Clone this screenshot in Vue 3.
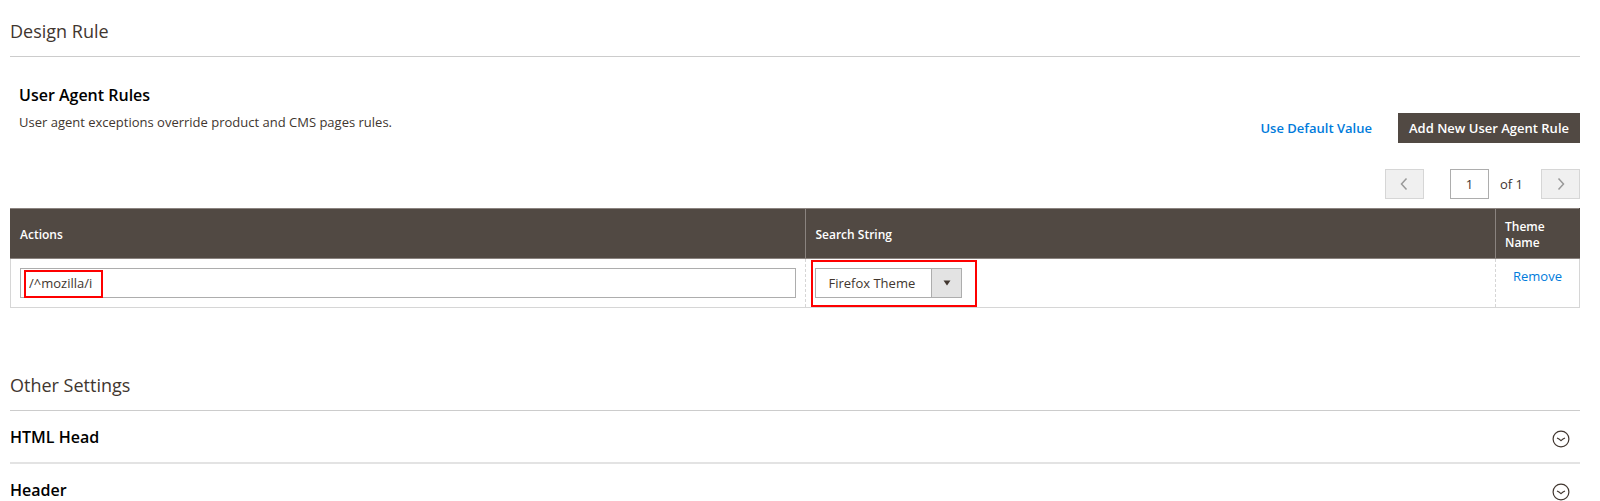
<script setup>
import { ref } from 'vue'

const rules = ref([{ id: 1, search: '/^mozilla/i', theme: 'Firefox Theme' }])
const themes = ['Firefox Theme']
const page = ref(1)
const sections = ref([
  { title: 'HTML Head', open: false },
  { title: 'Header', open: false }
])

function addRule() {
  rules.value.push({ id: Date.now(), search: '', theme: themes[0] })
}

function removeRule(id) {
  rules.value = rules.value.filter((rule) => rule.id !== id)
}
</script>

<template>
  <main class="page">
    <section>
      <h2 class="section-title">Design Rule</h2>

      <div class="rules-head">
        <div class="rules-info">
          <h3>User Agent Rules</h3>
          <p>User agent exceptions override product and CMS pages rules.</p>
        </div>
        <div class="rules-actions">
          <button type="button" class="btn-link">Use Default Value</button>
          <button type="button" class="btn-add" @click="addRule">Add New User Agent Rule</button>
        </div>
      </div>

      <div class="pager">
        <button type="button" class="pager-btn" aria-label="Previous page" disabled>
          <svg width="8" height="14" viewBox="0 0 8 14"><path d="M6.5 1.5 1.5 7l5 5.5" /></svg>
        </button>
        <label class="pager-label">
          <input v-model="page" type="text" class="pager-input" />
          <span>of 1</span>
        </label>
        <button type="button" class="pager-btn" aria-label="Next page" disabled>
          <svg width="8" height="14" viewBox="0 0 8 14"><path d="m1.5 1.5 5 5.5-5 5.5" /></svg>
        </button>
      </div>

      <table class="rules">
        <thead>
          <tr>
            <th class="col-search">Actions</th>
            <th>Search String</th>
            <th class="col-remove">Theme Name</th>
          </tr>
        </thead>
        <tbody>
          <tr v-for="rule in rules" :key="rule.id">
            <td>
              <div class="field">
                <input v-model="rule.search" type="text" class="text-input" aria-label="Search string" />
                <span class="mark mark-input"></span>
              </div>
            </td>
            <td>
              <div class="field select">
                <select v-model="rule.theme" aria-label="Theme">
                  <option v-for="theme in themes" :key="theme">{{ theme }}</option>
                </select>
                <span class="arrow">
                  <svg width="8" height="6" viewBox="0 0 8 6"><path d="M.5.5h7L4 5.5z" /></svg>
                </span>
                <span class="mark mark-select"></span>
              </div>
            </td>
            <td class="cell-remove">
              <button type="button" class="btn-remove" @click="removeRule(rule.id)">Remove</button>
            </td>
          </tr>
        </tbody>
      </table>
    </section>

    <section class="other">
      <h2 class="section-title">Other Settings</h2>
      <button
        v-for="item in sections"
        :key="item.title"
        type="button"
        class="accordion"
        :aria-expanded="item.open"
        @click="item.open = !item.open"
      >
        <span>{{ item.title }}</span>
        <svg width="18" height="18" viewBox="0 0 18 18">
          <circle cx="9" cy="9" r="7.9" />
          <path d="M5 8q2 .8 4 2.600Q11 8.800 13 8" />
        </svg>
      </button>
    </section>
  </main>
</template>

<style>
body {
  margin: 0;
  background: #fff;
}
</style>

<style scoped>
.page {
  padding: 17px 20px 0 10px;
  font-family: 'Open Sans', sans-serif;
  font-size: 13px;
  line-height: 16px;
  color: #41362f;
}

.page * {
  box-sizing: border-box;
}

button,
input,
select {
  margin: 0;
  font: inherit;
  color: inherit;
  border-radius: 0;
}

button {
  cursor: pointer;
}

svg {
  display: block;
  fill: none;
}

.section-title {
  margin: 0;
  padding-bottom: 11px;
  border-bottom: 1px solid #ccc;
  font-size: 18px;
  font-weight: 400;
  line-height: 28px;
}

.rules-head {
  display: flex;
  justify-content: space-between;
  align-items: flex-end;
  padding: 28px 0 0 9px;
}

.rules-info h3 {
  margin: 0 0 9px;
  font-size: 16px;
  font-weight: 600;
  line-height: 20px;
  color: #000;
}

.rules-info p {
  margin: 0 0 13px;
}

.rules-actions {
  display: flex;
  align-items: center;
  gap: 26px;
  font-weight: 600;
}

.btn-link,
.btn-remove {
  padding: 0;
  border: 0;
  background: none;
  color: #007bdb;
}

.btn-add {
  height: 30px;
  padding: 0 10px;
  border: 1px solid #514943;
  background: #514943;
  color: #fff;
}

.pager {
  display: flex;
  justify-content: flex-end;
  align-items: center;
  margin: 26px 0 9px;
}

.pager-btn {
  display: flex;
  justify-content: center;
  align-items: center;
  width: 39px;
  height: 30px;
  padding: 0;
  border: 1px solid #d6d6d6;
  background: #f0f0f0;
}

.pager-btn path {
  stroke: #999;
  stroke-width: 1.5;
}

.pager-label {
  display: flex;
  align-items: center;
  gap: 11px;
  margin: 0 18px 0 26px;
}

.pager-input {
  width: 39px;
  height: 30px;
  padding: 0;
  border: 1px solid #adadad;
  text-align: center;
}

.rules {
  width: 100%;
  border-collapse: collapse;
  table-layout: fixed;
}

.col-search {
  width: 50.7%;
}

.col-remove {
  width: 84px;
}

th {
  height: 50px;
  padding: 2px 9px 0;
  border: 1px solid #8a837f;
  border-left-color: #514943;
  background: #514943;
  color: #fff;
  font-size: 12px;
  font-weight: 600;
  text-align: left;
}

th:last-child {
  border-right-color: #514943;
}

th + th {
  border-left-color: #8a837f;
}

td {
  padding: 9px;
  border: 1px solid #d6d6d6;
  border-left-style: dashed;
  vertical-align: top;
}

td:first-child {
  border-left-style: solid;
}

td:not(:last-child) {
  border-right-style: dashed;
}

.field {
  position: relative;
  height: 30px;
}

.text-input {
  width: 100%;
  height: 30px;
  padding: 0 8px;
  border: 1px solid #adadad;
  background: #fff;
}

.select {
  width: 147px;
}

.select select {
  width: 100%;
  height: 30px;
  padding: 0 44px 0 12px;
  border: 1px solid #adadad;
  background: #fff;
  appearance: none;
}

.arrow {
  position: absolute;
  top: 0;
  right: 0;
  display: flex;
  justify-content: center;
  align-items: center;
  width: 31px;
  height: 30px;
  border: 1px solid #adadad;
  background: #e3e3e3;
  pointer-events: none;
}

.arrow path {
  fill: #41362f;
}

/* red highlight frames over the two fields */
.mark {
  position: absolute;
  border: 2px solid #fe0000;
  pointer-events: none;
}

.mark-input {
  top: 2px;
  left: 4px;
  width: 79px;
  height: 28px;
}

.mark-select {
  top: -8px;
  left: -4px;
  width: 166px;
  height: 47px;
}

.cell-remove {
  text-align: center;
}

.other {
  margin-top: 63px;
}

.accordion {
  display: flex;
  justify-content: space-between;
  align-items: center;
  width: 100%;
  height: 53px;
  padding: 4px 10px 0 0;
  border: 0;
  border-bottom: 2px solid #e3e3e3;
  background: none;
  font-size: 16px;
  font-weight: 600;
  color: #000;
}

.accordion:last-child {
  height: 37px;
  padding-top: 18px;
  border-bottom: 0;
}

.accordion span {
  padding-bottom: 4px;
}

.accordion svg {
  stroke: #41362f;
  stroke-width: 1.2;
}
</style>
